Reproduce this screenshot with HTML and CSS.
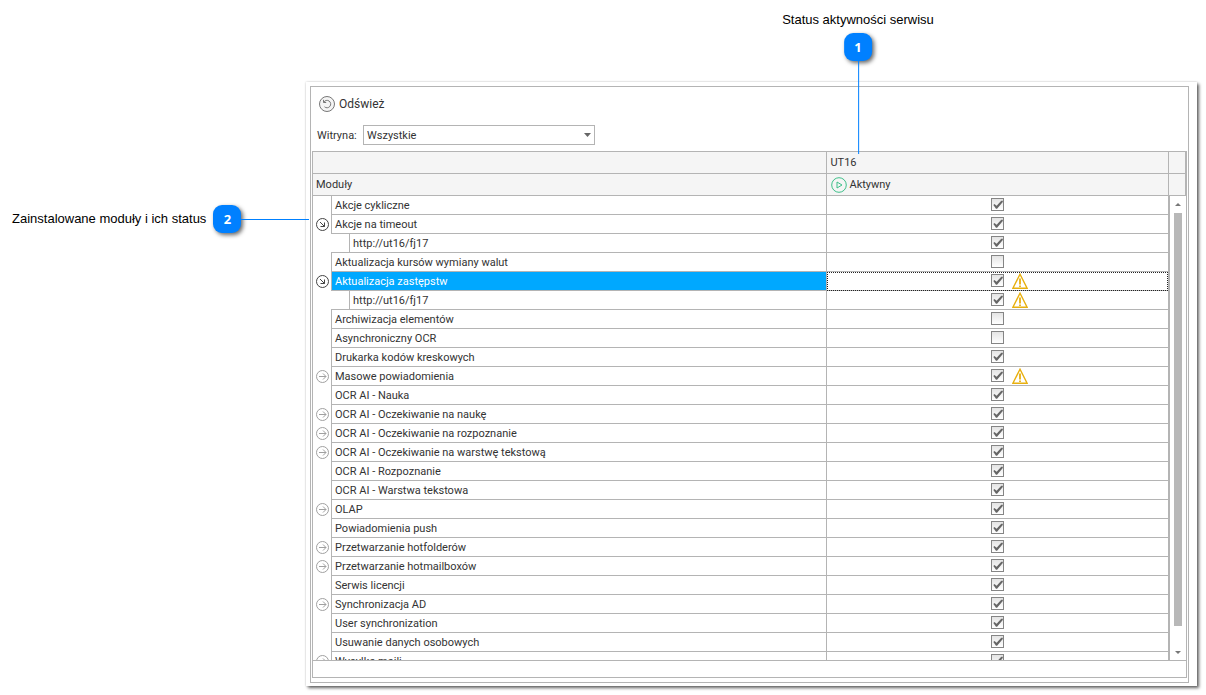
FILE: index.html
```html
<!DOCTYPE html>
<html lang="pl">
<head>
<meta charset="utf-8">
<title>Status aktywności serwisu</title>
<link rel="stylesheet" href="styles.css">
</head>
<body>
<svg class="sprite" aria-hidden="true">
  <symbol id="expand" viewBox="0 0 13 13"><circle cx="6.5" cy="6.5" r="6"/><path d="M3 6.5h7M7 3.5l3 3-3 3"/></symbol>
  <symbol id="collapse" viewBox="0 0 13 13"><circle cx="6.5" cy="6.5" r="6"/><path d="M4 4l4.5 4.5M8.500 4.500v4h-4"/></symbol>
  <symbol id="warning" viewBox="0 0 16 16"><path d="M8 1.200L.9 15.300h14.200z"/><path d="M8 5.500v6M8 12.500v1.500" stroke-width="1.800"/></symbol>
</svg>
<main class="page">
  <div class="note note-top"><span>Status aktywności serwisu</span><b class="badge">1</b><i class="line"></i></div>
  <div class="note note-side"><span>Zainstalowane moduły i ich status</span><b class="badge">2</b><i class="line"></i></div>
  <section class="window">
    <div class="frame">
      <button class="refresh" type="button">
        <svg width="16" height="16" viewBox="0 0 16 16"><circle cx="8" cy="8" r="7.500"/><path d="M4.800 6.200A3.700 3.700 0 1 1 5.500 10.800M4.500 3.800v2.700h2.700"/></svg>
        Odśwież
      </button>
      <div class="filter">
        <label for="site">Witryna:</label>
        <select id="site"><option>Wszystkie</option></select>
      </div>
      <div class="grid">
        <div class="viewport">
          <table>
            <colgroup><col class="col-mark"><col class="col-name"><col class="col-status"></colgroup>
            <thead>
              <tr><th colspan="2"></th><th>UT16</th></tr>
              <tr><th colspan="2">Moduły</th><th><span class="active"><svg width="16" height="16" viewBox="0 0 16 16"><circle cx="8" cy="8" r="7.300"/><path d="M6 5v6l5-3z"/></svg>Aktywny</span></th></tr>
            </thead>
            <tbody id="rows"></tbody>
          </table>
          <div class="scroll"><i class="head"></i><i class="head"></i><div class="track"><i class="up"></i><i class="thumb"></i><i class="down"></i></div></div>
        </div>
        <div class="footer"></div>
      </div>
    </div>
  </section>
</main>
<script src="rows.js"></script>
</body>
</html>
```
FILE: rows.js
```js
const modules = [
  ["Akcje cykliczne", "", 1], ["Akcje na timeout", "collapse", 1], ["http://ut16/fj17", "child", 1],
  ["Aktualizacja kursów wymiany walut", "", 0], ["Aktualizacja zastępstw", "collapse", 1, 1, 1],
  ["http://ut16/fj17", "child", 1, 1], ["Archiwizacja elementów", "", 0], ["Asynchroniczny OCR", "", 0],
  ["Drukarka kodów kreskowych", "", 1], ["Masowe powiadomienia", "expand", 1, 1], ["OCR AI - Nauka", "", 1],
  ["OCR AI - Oczekiwanie na naukę", "expand", 1], ["OCR AI - Oczekiwanie na rozpoznanie", "expand", 1],
  ["OCR AI - Oczekiwanie na warstwę tekstową", "expand", 1], ["OCR AI - Rozpoznanie", "", 1],
  ["OCR AI - Warstwa tekstowa", "", 1], ["OLAP", "expand", 1], ["Powiadomienia push", "", 1],
  ["Przetwarzanie hotfolderów", "expand", 1], ["Przetwarzanie hotmailboxów", "expand", 1],
  ["Serwis licencji", "", 1], ["Synchronizacja AD", "expand", 1], ["User synchronization", "", 1],
  ["Usuwanie danych osobowych", "", 1], ["Wysyłka maili", "expand", 1]
];
document.getElementById("rows").innerHTML = modules.map(([name, kind, on, warn, selected]) => {
  const child = kind === "child";
  const icon = kind && !child
    ? `<button type="button" class="toggle ${kind}" aria-label="${name}"><svg width="13" height="13"><use href="#${kind}"/></svg></button>` : "";
  const alert = warn ? '<svg class="warn" width="16" height="16"><use href="#warning"/></svg>' : "";
  return `<tr class="${child ? "child" : ""} ${selected ? "selected" : ""}"><td class="mark">${icon}</td>` +
    `<td class="name"><div>${name}</div></td><td class="status"><div><input type="checkbox" aria-label="${name}"${on ? " checked" : ""}>${alert}</div></td></tr>`;
}).join("");
```
FILE: styles.css
```css
* { box-sizing: border-box; }
body { margin: 0; background: #fff; color: #333; font: 11px/18px Roboto, "Noto Sans", sans-serif; }
.sprite { position: absolute; width: 0; height: 0; }
svg { fill: none; display: block; }
.page { position: relative; height: 100vh; padding: 82px 9px 9px 306px; }

.note { position: absolute; z-index: 2; display: flex; align-items: center; color: #000; font: 13px/16px "Liberation Sans", Arial, sans-serif; white-space: nowrap; }
.note-top { left: 858px; top: 12px; height: 142px; flex-direction: column; gap: 5px; transform: translateX(-50%); }
.note-side { left: 12px; top: 205px; width: 297px; gap: 7px; }
.badge { flex: none; width: 28px; height: 28px; border-radius: 9px; background: #0080ff; color: #fff; font-family: "Open Sans", sans-serif; line-height: 28px; text-align: center; box-shadow: 2px 2px 4px #0009; }
.line { flex: 1; background: #0080ff; }
.note-top .line { width: 1px; margin: -5px 0 0 1px; }
.note-side .line { height: 1px; margin-left: -7px; }

.window { height: 100%; padding: 4px 8px 3px 4px; background: #fff; box-shadow: 2px 2px 3px #0009, 0 0 2px #0003; }
.frame { height: 100%; display: flex; flex-direction: column; padding: 9px 1px 4px 1px; border: 1px solid #b4b4b4; }
.refresh { display: flex; align-items: center; align-self: flex-start; gap: 4px; height: 16px; margin-left: 7px; padding: 0; border: 0; background: none; color: inherit; font: inherit; font-size: 12px; }
.refresh svg { stroke: #777; }
.refresh circle { fill: #f4f4f4; }
.filter { display: flex; align-items: center; margin: 13px 0 6px 5px; }
label { width: 46px; line-height: 20px; padding-top: 1px; height: 20px; }
select { width: 232px; height: 20px; padding: 1px 3px 0; border: 1px solid #b4b4b4; border-radius: 0; color: inherit; font: inherit; appearance: none; background: #fff; }
.filter::after { content: ""; width: 7px; height: 4px; margin-left: -11px; background: #666; clip-path: polygon(0 0, 100% 0, 50% 100%); pointer-events: none; }

.grid { flex: 1; min-height: 0; display: flex; flex-direction: column; border: 1px solid #b4b4b4; }
.viewport { flex: 1; min-height: 0; display: flex; align-items: stretch; overflow: hidden; border-bottom: 1px solid #b4b4b4; }
.footer { height: 16px; }
table { flex: 1; height: max-content; table-layout: fixed; border-collapse: separate; border-spacing: 0; }
.col-mark { width: 18px; }
.col-name { width: 58%; }
th { height: 22px; padding: 0 3px; background: #f5f5f5; border: solid #b4b4b4; border-width: 0 1px 1px 0; text-align: left; font-weight: 400; line-height: 18px; }
.active { display: flex; align-items: center; gap: 2px; padding-left: 1px; }
.active svg { stroke: #3fc08a; }
td { height: 19px; padding: 0; }
.toggle { display: block; margin-left: 3px; padding: 0; border: 0; background: none; stroke: #a0a0a0; }
.toggle.collapse { stroke: #444; }
.name div { height: 19px; padding-left: 3px; border: solid #b4b4b4; border-width: 0 1px 1px; line-height: 20px; }
.child .name { border-bottom: 1px solid #b4b4b4; }
.child .name div { height: 18px; margin-left: 18px; border-bottom: 0; }
.selected .name div { background: #00a8ff; color: #fff; }
.status { border-right: 1px solid #b4b4b4; }
.status div { height: 19px; padding-bottom: 1px; display: grid; grid-template-columns: 1fr 13px 1fr; align-items: center; column-gap: 8px; border-bottom: 1px solid #b4b4b4; }
.selected .status div { outline: 1px dotted #222; outline-offset: -1px; }
input { grid-column: 2; appearance: none; width: 13px; height: 13px; margin: 0; border: 1px solid #858585; background: linear-gradient(#e4e4e4, #fff); }
input:checked::after { content: ""; display: block; width: 11px; height: 11px; background: #666; clip-path: polygon(10% 55%, 20% 45%, 40% 62%, 82% 15%, 96% 15%, 96% 28%, 44% 88%, 34% 88%); }
.warn { grid-column: 3; stroke: #e8b010; stroke-width: 1.400; }

.scroll { flex: none; width: 17px; display: flex; flex-direction: column; }
.head { flex: none; height: 22px; background: #f5f5f5; border: solid #b4b4b4; border-width: 0 1px 1px 0; }
.track { flex: 1; display: flex; flex-direction: column; align-items: center; padding: 7px 0 6px; border-left: 1px solid #b4b4b4; }
.thumb { flex: 1; width: 8px; margin: 7px 0 25px; background: #b8b8b8; }
.up, .down { width: 6px; height: 3px; background: #777; clip-path: polygon(0 100%, 50% 0, 100% 100%); }
.down { clip-path: polygon(0 0, 100% 0, 50% 100%); }
```
